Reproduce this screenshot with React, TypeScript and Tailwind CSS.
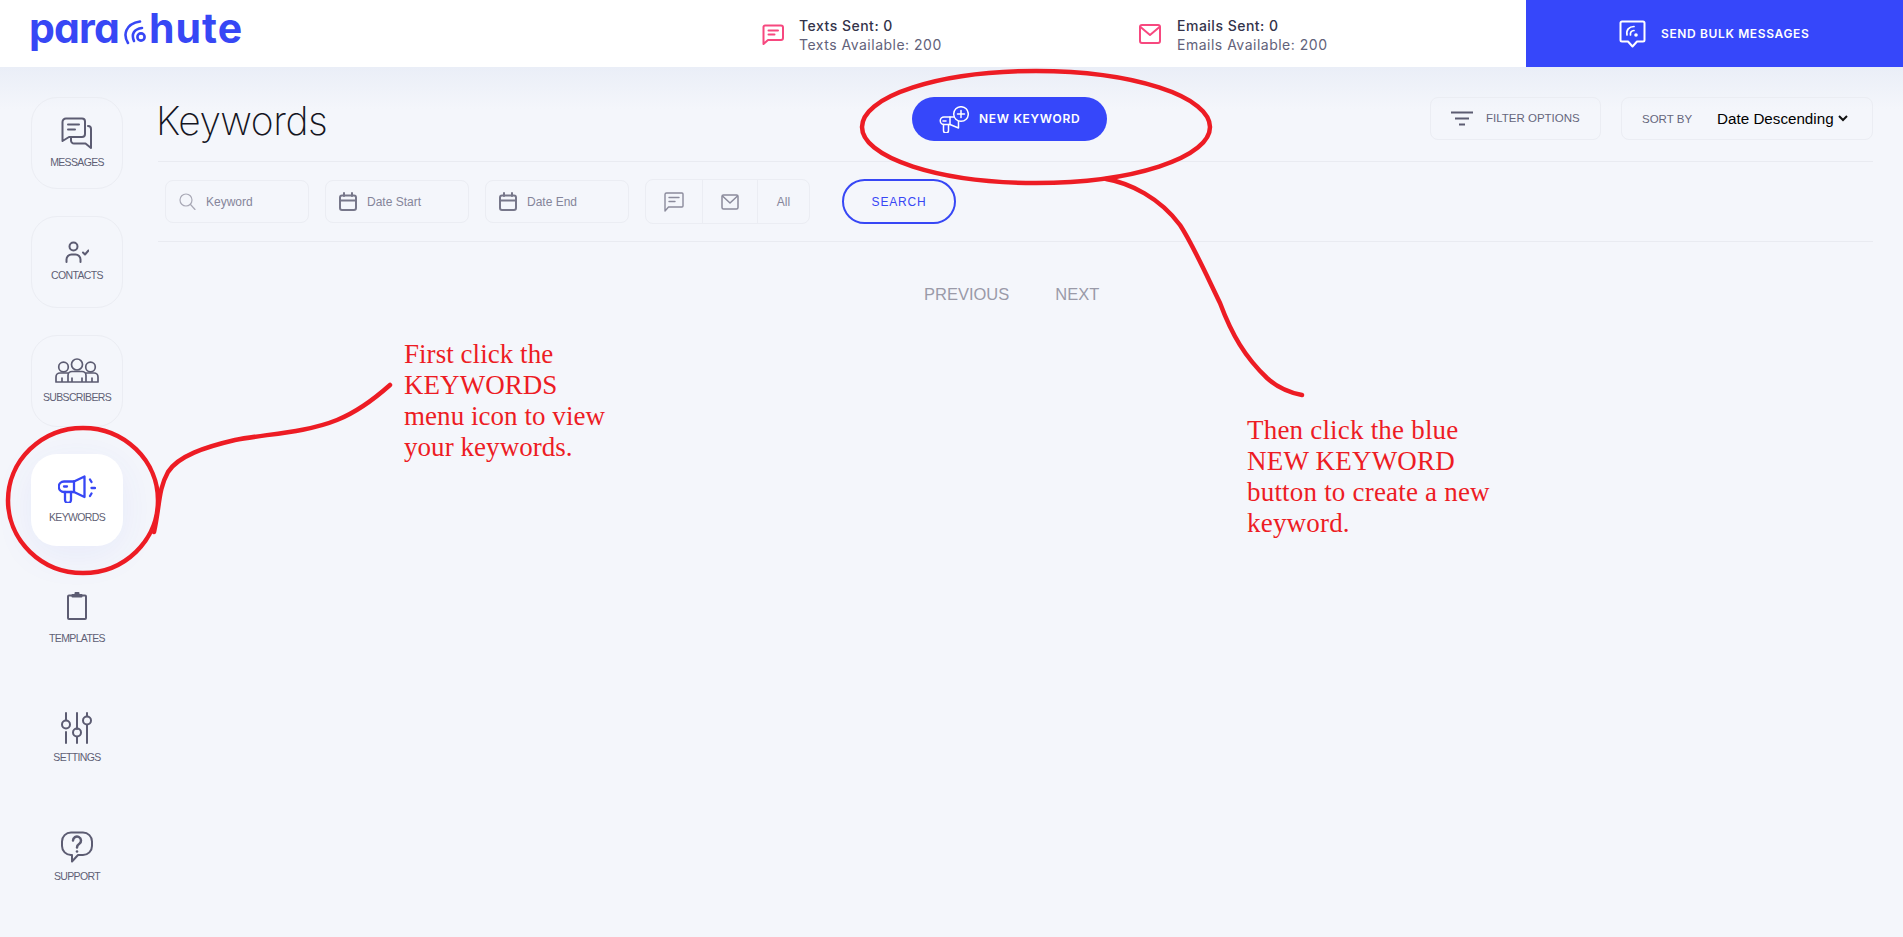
import React from "react";

const LIB = "[font-family:'Liberation_Sans',Arial,sans-serif]";
const INT = "[font-family:Inter,sans-serif]";

function Ic({ w, h, vb, children, className = "" }: { w: number; h: number; vb?: string; children: React.ReactNode; className?: string }) {
  return (
    <svg width={w} height={h} viewBox={vb ?? `0 0 ${w} ${h}`} fill="none" stroke="currentColor" strokeWidth={2} strokeLinecap="round" strokeLinejoin="round" className={"shrink-0 " + className}>
      {children}
    </svg>
  );
}

function NavItem({ label, active, boxed, gap, icon }: { label: string; active?: boolean; boxed?: boolean; gap: string; icon: React.ReactNode }) {
  const box = active
    ? "bg-white shadow-[0_8px_40px_rgba(55,71,245,0.07)]"
    : boxed
    ? "border border-[#ebedf3]"
    : "";
  return (
    <div className={`w-[92px] h-[92px] rounded-[26px] flex flex-col items-center justify-center shrink-0 pb-[2px] text-[#5c5c72] ${gap} ${box}`}>
      {icon}
      <span className={`${LIB} text-[10.5px] leading-[11px] tracking-[-0.65px] text-[#5f5f75]`}>{label}</span>
    </div>
  );
}

function Calendar() {
  return (
    <Ic w={18} h={19} className="text-[#77778a]">
      <rect x="1" y="3.5" width="16" height="14.5" rx="2" />
      <path d="M1 8.5H17M5 1V4M13 1V4" />
    </Ic>
  );
}

function FilterBox({ icon, label }: { icon: React.ReactNode; label: string }) {
  return (
    <div className={`w-[144px] h-[43px] rounded-[8px] border border-[#ebedf3] flex items-center pl-[13px] gap-[10px] ${LIB} text-[12px] text-[#85859a]`}>
      {icon}
      <span>{label}</span>
    </div>
  );
}

export default function App() {
  return (
    <div className="relative w-full h-screen overflow-hidden bg-[#f4f6fb]">
      <header className="h-[67px] bg-white flex items-stretch">
        <div className="w-[762px] pl-[29px] flex items-start pt-[3px] text-[#3747f5]">
          <span className={`${INT} text-[41px] leading-[50px] font-bold tracking-[-0.8px] [font-feature-settings:'cv11']`}>para</span>
          <svg width="26" height="26" viewBox="0 0 26 26" fill="none" stroke="#3747f5" strokeWidth="2.6" strokeLinecap="round" className="mt-[16px] ml-[4px] shrink-0">
            <path d="M5 24C0 16 2 5 17 2.5" />
            <path d="M11 22C8 15 11 10 19 9" />
            <circle cx="18" cy="18" r="3.6" />
          </svg>
          <span className={`${INT} text-[41px] leading-[50px] font-bold tracking-[1px]`}>hute</span>
        </div>
        <div className="w-[377px] flex items-center gap-[15px]">
          <Ic w={22} h={22} className="text-[#f7487f]">
            <path d="M3 2.5H19a2 2 0 0 1 2 2V15a2 2 0 0 1-2 2H6L1.5 21V4a1.5 1.5 0 0 1 1.5-1.5Z" />
            <path d="M6.5 7.5H16M6.5 11.5H12.5" />
          </Ic>
          <div className={`${INT} text-[14px] leading-[19px] tracking-[0.5px] pt-[3px]`}>
            <div className="font-medium text-[#33334a]">Texts Sent: 0</div>
            <div className="text-[#62627a]">Texts Available: 200</div>
          </div>
        </div>
        <div className="flex items-center gap-[16px]">
          <Ic w={22} h={20} className="text-[#f7487f]">
            <rect x="1" y="1" width="20" height="18" rx="2" />
            <path d="M1.5 3L11 11L20.5 3" />
          </Ic>
          <div className={`${INT} text-[14px] leading-[19px] tracking-[0.5px] pt-[3px]`}>
            <div className="font-medium text-[#33334a]">Emails Sent: 0</div>
            <div className="text-[#62627a]">Emails Available: 200</div>
          </div>
        </div>
        <div className="ml-auto w-[377px] bg-[#3647fa] flex items-center pl-[93px] gap-[15px] text-white">
          <Ic w={27} h={28} className="mt-[1px]">
            <path d="M3 1.5H24a1.5 1.5 0 0 1 1.5 1.5V20a1.5 1.5 0 0 1-1.5 1.5H18L13.5 26.5L9 21.5H3A1.5 1.5 0 0 1 1.5 20V3A1.5 1.5 0 0 1 3 1.5Z" />
            <path d="M8 15C7 10 10 6.5 15 6.5" strokeWidth="1.7" />
            <path d="M11.5 15C11 12.5 12.5 10.5 15 10.5" strokeWidth="1.7" />
            <circle cx="17" cy="15" r="1.8" fill="currentColor" stroke="none" />
          </Ic>
          <span className={`${INT} text-[12px] font-semibold tracking-[0.63px]`}>SEND BULK MESSAGES</span>
        </div>
      </header>

      <div className="flex h-[870px] bg-[linear-gradient(#eaeef7,#f4f6fb_42px)]">
        <nav className="w-[158px] shrink-0 pl-[31px] pt-[30px] flex flex-col gap-[27px]">
          <NavItem label="MESSAGES" boxed gap="gap-[8px]" icon={
            <Ic w={32} h={32}>
              <path d="M5 1.5H21a3 3 0 0 1 3 3V17a3 3 0 0 1-3 3H8L1.5 24V5A3.5 3.5 0 0 1 5 1.5Z" />
              <path d="M7 7.5H18M7 12.5H14" />
              <path d="M27 9a3 3 0 0 1 3 3V31L24.5 26.5H13a3 3 0 0 1-3-3V21" />
            </Ic>
          } />
          <NavItem label="CONTACTS" boxed gap="gap-[7px]" icon={
            <Ic w={24} h={22}>
              <circle cx="8.5" cy="5.5" r="4" />
              <path d="M1.5 21V18.5a5 5 0 0 1 5-5h4a5 5 0 0 1 5 5V21" />
              <path d="M18 11.5L20 13.5L23.5 9.5" />
            </Ic>
          } />
          <NavItem label="SUBSCRIBERS" boxed gap="gap-[9px]" icon={
            <Ic w={44} h={25} className="[&_*]:[stroke-width:1.7]">
              <circle cx="22" cy="6.5" r="5.5" />
              <circle cx="8.5" cy="9" r="4.8" />
              <circle cx="35.5" cy="9" r="4.8" />
              <path d="M1 24H43M13 24V17.5a4 4 0 0 1 4-4H27a4 4 0 0 1 4 4V24M1 24V19a4 4 0 0 1 4-4H13M43 24V19a4 4 0 0 0-4-4H31M7 24V20M37 24V20M17 24V20M27 24V20" />
            </Ic>
          } />
          <NavItem label="KEYWORDS" active gap="gap-[9px]" icon={
            <span className="text-[#3747f5]">
              <Ic w={38} h={28} className="[&_*]:[stroke-width:2.3]">
                <path d="M6 6.5H16L26.5 1.5V22L16 17H6A5.25 5.25 0 0 1 6 6.5Z" />
                <path d="M16 6.5V17M6 11.5H9M7 17V25a3 3 0 0 0 6 0V17" />
                <path d="M32 4.5L33.5 7M33.5 13H37M32 21L33.5 18.5" />
              </Ic>
            </span>
          } />
          <NavItem label="TEMPLATES" gap="gap-[13px]" icon={
            <Ic w={20} h={28}>
              <rect x="1" y="3.5" width="18" height="23.5" rx="1" />
              <path d="M5.5 4.5V3H8.5V1H11.5V3H14.5V4.5Z" fill="currentColor" />
            </Ic>
          } />
          <NavItem label="SETTINGS" gap="gap-[8px]" icon={
            <Ic w={32} h={32}>
              <path d="M5 1V8M5 20V31M16 1V17M16 25V31M26 1V4M26 13V31" />
              <circle cx="5" cy="12.5" r="4" />
              <circle cx="16" cy="20.5" r="4" />
              <circle cx="26" cy="8.5" r="4" />
            </Ic>
          } />
          <NavItem label="SUPPORT" gap="gap-[8px]" icon={
            <Ic w={32} h={32}>
              <path d="M10 1.5H22a9 9 0 0 1 9 9V15a9 9 0 0 1-9 9H17L11 30.5V24H10a9 9 0 0 1-9-9V10.5a9 9 0 0 1 9-9Z" />
              <path d="M12 9.5a4 4 0 1 1 6.3 3.3C16.8 13.8 16 14.5 16 16.5" strokeWidth="2.5" />
              <circle cx="16" cy="20.5" r="1.3" fill="currentColor" stroke="none" />
            </Ic>
          } />
        </nav>

        <main className="w-[1715px] shrink-0">
          <div className="flex items-start h-[95px] pt-[30px] border-b border-[#e9ebf1]">
            <h1 className={`${INT} w-[754px] -ml-[2px] pt-[2px] mr-[2px] text-[39px] leading-[44px] font-extralight tracking-[-0.5px] text-[#15151f]`}>Keywords</h1>
            <button className="w-[195px] h-[44px] rounded-full bg-[#3647fa] flex items-center pl-[27px] gap-[10px] text-white">
              <Ic w={30} h={27} className="[&_*]:[stroke-width:1.5]">
                <circle cx="22" cy="8" r="7.3" />
                <path d="M22 4.5V11.5M18.5 8H25.5" />
                <path d="M14.5 11H5A3.5 3.5 0 0 0 5 18.5H11L19.5 22V15.5" />
                <path d="M11 11V18.5M4.5 18.5V24.5a1.7 1.7 0 0 0 5 0V18.5M4 15H7" />
              </Ic>
              <span className={`${INT} text-[12px] font-semibold tracking-[0.7px]`}>NEW KEYWORD</span>
            </button>
            <div className={`ml-[323px] w-[171px] h-[43px] rounded-[8px] border border-[#ebedf3] flex items-center pl-[20px] gap-[13px] ${LIB} text-[11.5px] text-[#66667c]`}>
              <svg width="22" height="15" viewBox="0 0 22 15" fill="none" stroke="#5c5c72" strokeWidth="1.8" className="shrink-0">
                <path d="M0 1.5H22M4 7.5H18M8 13.5H14" />
              </svg>
              <span className="mt-[1px]">FILTER OPTIONS</span>
            </div>
            <div className={`ml-[20px] w-[252px] h-[43px] rounded-[8px] border border-[#ebedf3] flex items-center pl-[20px] ${LIB}`}>
              <span className="text-[11.5px] text-[#66667c] mt-[2px]">SORT BY</span>
              <span className="ml-[25px] mt-[1px] text-[15.2px] text-black">Date Descending</span>
              <svg width="10" height="7" viewBox="0 0 10 7" fill="none" stroke="#111" strokeWidth="2" className="ml-[4px]">
                <path d="M1 1L5 5L9 1" />
              </svg>
            </div>
          </div>

          <div className="flex items-center h-[80px] pl-[7px] border-b border-[#e9ebf1]">
            <FilterBox label="Keyword" icon={
              <Ic w={17} h={17} className="text-[#a9a9b6]">
                <g strokeWidth="1.2">
                  <circle cx="7" cy="7" r="6" />
                  <path d="M11.5 11.5L16 16.5" />
                </g>
              </Ic>
            } />
            <div className="w-[16px]" />
            <FilterBox label="Date Start" icon={<Calendar />} />
            <div className="w-[16px]" />
            <FilterBox label="Date End" icon={<Calendar />} />
            <div className="w-[16px]" />
            <div className={`flex w-[165px] h-[45px] rounded-[8px] border border-[#ebedf3] ${LIB} text-[12px] text-[#85859a]`}>
              <div className="w-[57px] border-r border-[#ebedf3] flex items-center justify-center">
                <Ic w={20} h={20} className="text-[#8b8b9c]">
                  <g strokeWidth="1.4">
                    <path d="M2.5 1H18a1 1 0 0 1 1 1V14a1 1 0 0 1-1 1H4.5L1 19V2.5A1.5 1.5 0 0 1 2.5 1Z" />
                    <path d="M5 5.5H15M5 9.5H11" />
                  </g>
                </Ic>
              </div>
              <div className="w-[55px] border-r border-[#ebedf3] flex items-center justify-center">
                <Ic w={18} h={16} className="text-[#8b8b9c]">
                  <g strokeWidth="1.5">
                    <rect x="1" y="1" width="16" height="14" rx="1.5" />
                    <path d="M1.5 2L9 9L16.5 2" />
                  </g>
                </Ic>
              </div>
              <div className="flex-1 flex items-center justify-center">All</div>
            </div>
            <button className={`ml-[32px] w-[114px] h-[45px] rounded-full border-2 border-[#3747f5] ${LIB} text-[12px] tracking-[0.8px] text-[#3747f5]`}>SEARCH</button>
          </div>

          <div className={`flex pt-[42px] pl-[766px] ${LIB} text-[16.5px] leading-[20px] text-[#9a9aa8]`}>
            <span>PREVIOUS</span>
            <span className="ml-[46px]">NEXT</span>
          </div>
        </main>
      </div>

      <svg className="absolute inset-0 pointer-events-none" width="1903" height="937" viewBox="0 0 1903 937" fill="none" stroke="#ed1c24" strokeWidth="4.5" strokeLinecap="round">
        <ellipse cx="83" cy="500.5" rx="75" ry="72.5" />
        <ellipse cx="1036" cy="127" rx="174" ry="56" />
        <path d="M154 532C160 505 158 490 168 472C178 456 205 447 235 440C265 434 305 433 337 420C352 414 372 401 390 385" />
        <path d="M1106 179C1130 183 1160 198 1180 225C1192 243 1205 272 1220 303C1232 335 1245 357 1267 378C1278 388 1292 393 1302 395" />
      </svg>

      <div className="absolute left-[404px] top-[339px] [font-family:'Liberation_Serif','Times_New_Roman',serif] text-[27px] leading-[31px] tracking-[0.05px] text-[#ed1c24]">
        First click the<br />KEYWORDS<br />menu icon to view<br />your keywords.
      </div>
      <div className="absolute left-[1247px] top-[415px] [font-family:'Liberation_Serif','Times_New_Roman',serif] text-[27px] leading-[31px] tracking-[0.2px] text-[#ed1c24]">
        Then click the blue<br />NEW KEYWORD<br />button to create a new<br />keyword.
      </div>
    </div>
  );
}
